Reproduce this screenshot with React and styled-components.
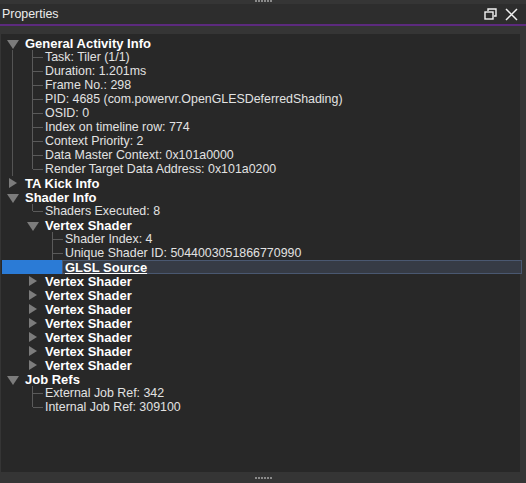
import React from "react";
import styled, { createGlobalStyle } from "styled-components";

const Global = createGlobalStyle`
    html, body {
        margin: 0;
        padding: 0;
        background: #353535;
    }
    body {
        font-family: "Liberation Sans", Arial, sans-serif;
        font-size: 12px;
        color: #e4e4e4;
    }
`;

const Dock = styled.div`
    width: 526px;
    height: 483px;
    display: flex;
    flex-direction: column;
    background: #353535;
    overflow: hidden;
`;

const Grip = styled.div`
    height: ${({ h }) => h}px;
    display: flex;
    justify-content: center;
    align-items: ${({ align }) => align};
    gap: 1px;
`;

const GripDot = styled.span`
    width: 2px;
    height: 2px;
    background: #8a8a8a;
`;

const TitleBar = styled.div`
    height: 20px;
    display: flex;
    align-items: center;
    padding: 0 8px 0 2px;
    background: #2d2d2d;
    border-bottom: 2px solid #5c2a7e;
`;

const Title = styled.div`
    flex: 1;
    color: #ececec;
    font-size: 12.4px;
`;

const TitleButtons = styled.div`
    display: flex;
    gap: 8px;
    align-items: center;
`;

const Body = styled.div`
    flex: 1;
    display: flex;
    padding: 8px 6px 0 1px;
    min-height: 0;
`;

const Tree = styled.div`
    flex: 1;
    background: #282828;
    padding: 2px 0 0 1px;
`;

const Row = styled.div`
    height: 14px;
    display: flex;
    align-items: stretch;
`;

const Cell = styled.div`
    width: 20px;
    flex: none;
    position: relative;
    background: ${({ selected }) => (selected ? "#2b7bd6" : "transparent")};

    ${({ guide }) =>
        guide &&
        `&::before {
            content: "";
            position: absolute;
            left: 10px;
            top: 0;
            bottom: 0;
            border-left: 1px solid #545454;
        }`}
`;

const Branch = styled.div`
    position: absolute;
    left: 10px;
    top: 0;
    height: ${({ last }) => (last ? "7px" : "14px")};
    border-left: 1px solid #5a5a5a;

    &::after {
        content: "";
        position: absolute;
        left: 0;
        top: 7px;
        width: 10px;
        border-top: 1px solid #5a5a5a;
    }
`;

const Arrow = styled.div`
    position: absolute;
    left: ${({ open }) => (open ? 5 : 7)}px;
    top: ${({ open }) => (open ? 4 : 2)}px;
    width: 0;
    height: 0;
    ${({ open }) =>
        open
            ? `border-left: 6px solid transparent;
               border-right: 6px solid transparent;
               border-top: 9px solid #7c7c7c;`
            : `border-top: 5px solid transparent;
               border-bottom: 5px solid transparent;
               border-left: 8px solid #7c7c7c;`}
`;

const Label = styled.div`
    flex: 1;
    display: flex;
    align-items: center;
    padding-left: 3px;
    white-space: nowrap;
    font-weight: ${({ bold }) => (bold ? 700 : 400)};
    font-size: ${({ bold }) => (bold ? "13px" : "12.4px")};
    color: ${({ bold }) => (bold ? "#ffffff" : "#e2e2e2")};
    text-decoration: ${({ selected }) => (selected ? "underline" : "none")};
    background: ${({ selected }) => (selected ? "#363b45" : "transparent")};
    border: ${({ selected }) => (selected ? "1px solid #4a5871" : "none")};
    margin-right: ${({ selected }) => (selected ? "-2px" : "0")};
    box-sizing: border-box;
    ${({ selected }) => selected && "padding-left: 2px;"}
`;

const vs = (open) => ({
    label: "Vertex Shader",
    bold: true,
    open,
    children: open
        ? [
              { label: "Shader Index: 4" },
              { label: "Unique Shader ID: 5044003051866770990" },
              { label: "GLSL Source", bold: true, selected: true },
          ]
        : [],
});

const data = [
    {
        label: "General Activity Info",
        bold: true,
        open: true,
        guide: true,
        children: [
            { label: "Task: Tiler (1/1)" },
            { label: "Duration: 1.201ms" },
            { label: "Frame No.: 298" },
            { label: "PID: 4685 (com.powervr.OpenGLESDeferredShading)" },
            { label: "OSID: 0" },
            { label: "Index on timeline row: 774" },
            { label: "Context Priority: 2" },
            { label: "Data Master Context: 0x101a0000" },
            { label: "Render Target Data Address: 0x101a0200" },
        ],
    },
    { label: "TA Kick Info", bold: true, open: false, children: [] },
    {
        label: "Shader Info",
        bold: true,
        open: true,
        children: [
            { label: "Shaders Executed: 8" },
            vs(true),
            vs(false),
            vs(false),
            vs(false),
            vs(false),
            vs(false),
            vs(false),
            vs(false),
        ],
    },
    {
        label: "Job Refs",
        bold: true,
        open: true,
        children: [
            { label: "External Job Ref: 342" },
            { label: "Internal Job Ref: 309100" },
        ],
    },
];

const flatten = (nodes, depth = 0, guides = [], out = []) => {
    nodes.forEach((node, i) => {
        const next = nodes[i + 1];
        const last = !next || next.children !== undefined;
        out.push({ node, depth, guides, last });
        if (node.open && node.children) {
            flatten(node.children, depth + 1, [...guides, !!node.guide], out);
        }
    });
    return out;
};

const TreeRow = ({ item }) => {
    const { node, guides, last } = item;
    const expandable = node.children !== undefined;
    const sel = node.selected;
    return (
        <Row>
            {guides.map((g, i) => (
                <Cell key={i} guide={g} selected={sel} />
            ))}
            <Cell selected={sel}>
                {expandable && <Arrow open={node.open} />}
                {!expandable && !sel && <Branch last={last} />}
            </Cell>
            <Label bold={node.bold} selected={sel}>
                {node.label}
            </Label>
        </Row>
    );
};

const RestoreIcon = () => (
    <svg width="13" height="12" viewBox="0 0 13 12" fill="none" stroke="#f2f2f2" strokeWidth="1.4">
        <path d="M4 3V1h8v7h-2" />
        <rect x="1" y="4" width="8" height="7" />
    </svg>
);

const CloseIcon = () => (
    <svg width="13" height="13" viewBox="0 0 13 13" stroke="#f2f2f2" strokeWidth="1.5">
        <path d="M1 1l11 11M12 1L1 12" />
    </svg>
);

const dots = [0, 1, 2, 3, 4, 5];

export default function App() {
    const rows = flatten(data);
    return (
        <Dock>
            <Global />
            <Grip h={4} align="flex-start">
                {dots.map((d) => (
                    <GripDot key={d} />
                ))}
            </Grip>
            <TitleBar>
                <Title>Properties</Title>
                <TitleButtons>
                    <RestoreIcon />
                    <CloseIcon />
                </TitleButtons>
            </TitleBar>
            <Body>
                <Tree>
                    {rows.map((r, i) => (
                        <TreeRow key={i} item={r} />
                    ))}
                </Tree>
            </Body>
            <Grip h={11} align="center">
                {dots.map((d) => (
                    <GripDot key={d} />
                ))}
            </Grip>
        </Dock>
    );
}
